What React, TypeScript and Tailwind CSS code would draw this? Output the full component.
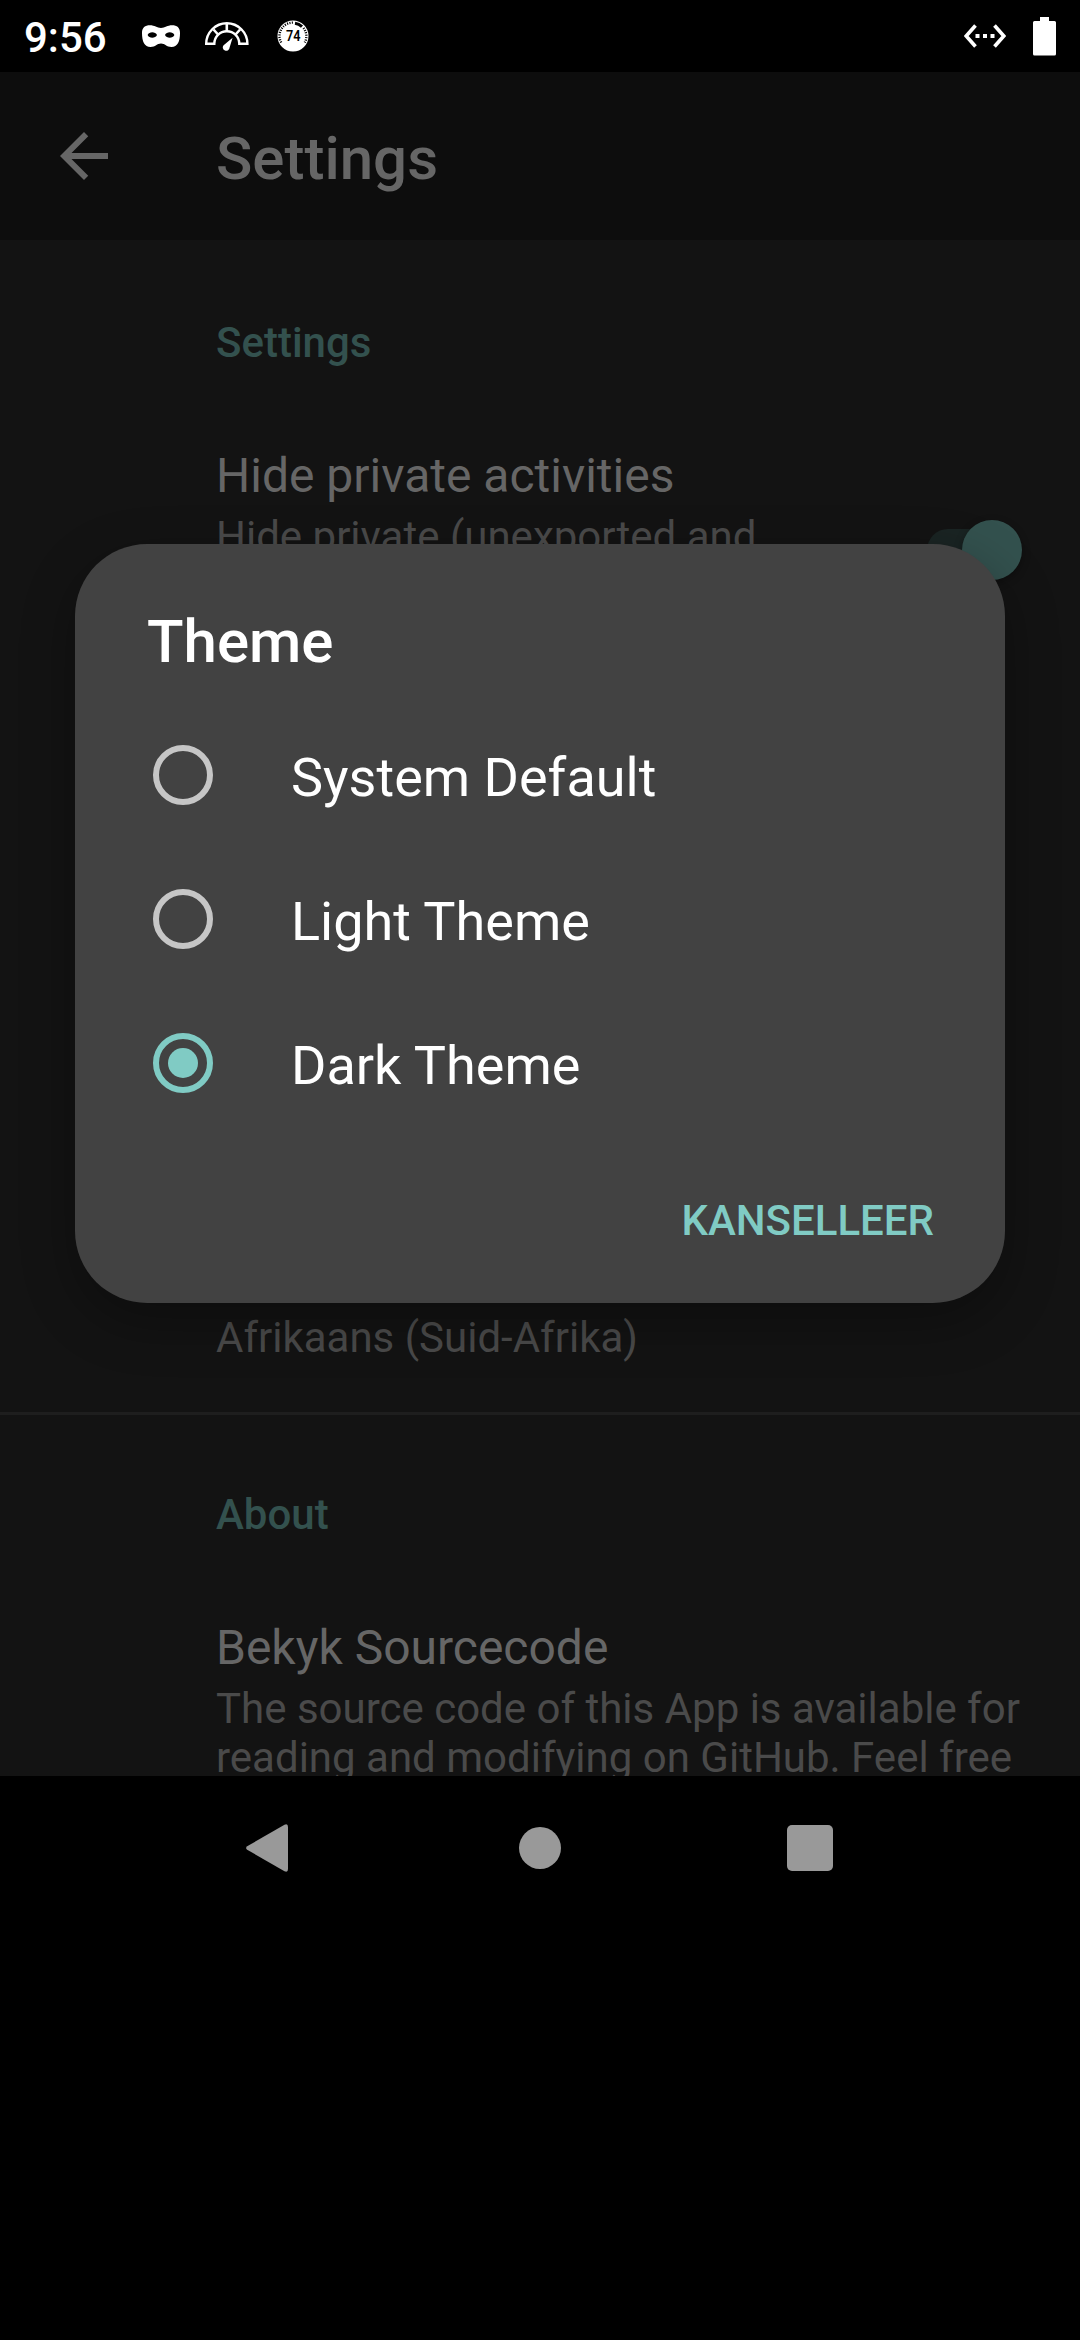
import React from "react";

const MaskIcon = () => (
  <svg className="ml-[36px] h-[24px] w-[40px]" viewBox="0 0 40 24">
    <path
      fill="#fff"
      fillRule="evenodd"
      d="M9 1.300C13.500 1.300 16 4 20 4C24 4 26.500 1.300 31 1.300C36 1.300 39 3.600 39 9C39 17.500 36.500 23 30.500 23C25.500 23 24 19.500 20 19.500C16 19.500 14.500 23 9.500 23C3.500 23 1 17.500 1 9C1 3.600 4 1.300 9 1.300ZM6.600 11C8 14.500 14.500 14.500 16 11C14.500 7.400 8 7.400 6.600 11ZM33.400 11C32 7.400 25.500 7.400 24 11C25.500 14.500 32 14.500 33.400 11Z"
    />
  </svg>
);

const GaugeIcon = () => (
  <svg className="ml-[23px] h-[30px] w-[46px]" viewBox="0 0 46 30" fill="none" stroke="#fff">
    <path strokeWidth="2.400" d="M2.200 22.800A20.600 20.600 0 0 1 43.400 22.800H35.300A12.500 12.500 0 0 0 10.300 22.800Z" />
    <path strokeWidth="2.600" d="M22.800 2V10.500M9.500 8.500L14.500 14M36.100 8.500L31.100 14" />
    <path fill="#fff" stroke="none" d="M28.600 16.800L25.600 26.500A3.400 3.400 0 1 1 19.600 24.200Z" />
  </svg>
);

const BadgeIcon = () => (
  <svg className="ml-[27px] h-[32px] w-[32px]" viewBox="0 0 32 32">
    <circle cx="16" cy="16" r="15.500" fill="#fff" />
    <path
      d="M4.200 22.500A13.300 13.300 0 0 1 17 2.700"
      fill="none"
      stroke="#000"
      strokeWidth="2.400"
      strokeDasharray="1.100 1.300"
    />
    <path d="M18 3.200A13 13 0 0 1 25 6.700" fill="none" stroke="#000" strokeWidth="3" />
    <path
      d="M26.500 8A13.300 13.300 0 0 1 27.800 22.500"
      fill="none"
      stroke="#000"
      strokeWidth="2.400"
      strokeDasharray="1.100 1.300"
    />
    <text
      x="9"
      y="21.300"
      textLength="14.500"
      lengthAdjust="spacingAndGlyphs"
      fontFamily="Roboto, sans-serif"
      fontWeight="600"
      fontSize="15"
      fill="#000"
    >
      74
    </text>
  </svg>
);

const LinkIcon = () => (
  <svg className="h-[24px] w-[42px]" viewBox="0 0 42 24">
    <path d="M11.500 1.500L2.200 12L11.500 22.500M30.500 1.500L39.800 12L30.500 22.500" fill="none" stroke="#fff" strokeWidth="3.600" />
    <path d="M11.500 10h4v4h-4zM19 10h4v4h-4zM26.500 10h4v4h-4z" fill="#fff" />
  </svg>
);

const BatteryIcon = () => (
  <svg className="ml-[27px] mr-[24px] h-[39px] w-[23px]" viewBox="0 0 23 39">
    <path d="M7 0h9v4h5.500q1.500 0 1.500 1.500v31.500q0 1.500 -1.500 1.500h-20q-1.500 0 -1.500 -1.500v-31.500q0 -1.500 1.500 -1.500h5.500z" fill="#fff" />
  </svg>
);

function StatusBar() {
  return (
    <header className="flex h-[72px] items-center bg-black">
      <span className="ml-[24px] w-[81px] pt-[3px] text-[42px] leading-[49px] font-medium text-white">9:56</span>
      <MaskIcon />
      <GaugeIcon />
      <BadgeIcon />
      <div className="flex-1" />
      <LinkIcon />
      <BatteryIcon />
    </header>
  );
}

function Category({ children }: { children: React.ReactNode }) {
  return <h2 className="text-[42px] leading-[49px] font-medium text-[#33514e]">{children}</h2>;
}

const options = [
  { label: "System Default", selected: false },
  { label: "Light Theme", selected: false },
  { label: "Dark Theme", selected: true },
];

function ThemeDialog() {
  return (
    <section
      role="dialog"
      className="absolute top-[544px] left-[75px] flex h-[759px] w-[930px] flex-col rounded-[72px] bg-[#424242] pt-[63px] shadow-[0_18px_54px_rgba(0,0,0,0.3)]"
    >
      <h2 className="ml-[72px] text-[60px] leading-[70px] font-medium text-white">Theme</h2>
      <div className="mt-[26px]">
        {options.map((o) => (
          <div key={o.label} className="flex h-[144px] items-center pl-[78px]">
            <span
              className={
                o.selected
                  ? "flex size-[60px] items-center justify-center rounded-full border-[6px] border-[#80cbc4]"
                  : "size-[60px] rounded-full border-[6px] border-[#c6c6c6]"
              }
            >
              {o.selected && <span className="size-[30px] rounded-full bg-[#80cbc4]" />}
            </span>
            <span className="ml-[78px] pt-[5px] text-[54px] leading-[64px] text-white">{o.label}</span>
          </div>
        ))}
      </div>
      <button className="mt-[61px] mr-[71px] self-end text-[42px] leading-[49px] font-medium text-[#80cbc4]">
        KANSELLEER
      </button>
    </section>
  );
}

export default function App() {
  return (
    <div className="relative flex h-[2340px] w-[1080px] flex-col overflow-hidden bg-black font-['Roboto',sans-serif]">
      <StatusBar />
      <div className="flex h-[168px] items-start bg-[#0d0d0d]">
        <svg className="mt-[60px] ml-[60px] h-[48px] w-[48px]" viewBox="4 4 16 16">
          <path fill="#666" d="M20 11H7.830l5.590-5.590L12 4l-8 8 8 8 1.410-1.410L7.830 13H20v-2z" />
        </svg>
        <h1 className="mt-[52px] ml-[108px] text-[60px] leading-[70px] font-medium text-[#666]">Settings</h1>
      </div>

      <main className="flex h-[1536px] flex-col overflow-hidden bg-[#131313]">
        <div className="h-[1172px] shrink-0 pt-[78px] pl-[216px]">
          <Category>Settings</Category>
          <div className="mt-[81px] flex">
            <div className="w-[711px]">
              <h3 className="text-[48px] leading-[56px] text-[#666]">Hide private activities</h3>
              <p className="mt-2 text-[42px] leading-[49px] text-[#4a4a4a]">Hide private (unexported and</p>
            </div>
            <div className="mt-[81px] flex h-[42px] w-[90px] items-center justify-end rounded-full bg-[#1a2423]">
              <span className="-mr-[5px] size-[60px] shrink-0 rounded-full bg-[#33514e] shadow-[0_3px_9px_rgba(0,0,0,0.3)]" />
            </div>
          </div>
          <p className="mt-[742px] text-[42px] leading-[49px] text-[#4a4a4a]">Afrikaans (Suid-Afrika)</p>
        </div>
        <div className="h-[3px] shrink-0 bg-[#1e1e1e]" />
        <div className="shrink-0 pt-[75px] pl-[216px]">
          <Category>About</Category>
          <h3 className="mt-[81px] text-[48px] leading-[56px] text-[#666]">Bekyk Sourcecode</h3>
          <p className="mt-2 text-[42px] leading-[49px] whitespace-nowrap text-[#4a4a4a]">
            The source code of this App is available for
            <br />
            reading and modifying on GitHub. Feel free
          </p>
        </div>
      </main>

      <nav className="flex h-[144px] items-center bg-black">
        <svg className="ml-[246px] h-[48px] w-[42px]" viewBox="0 0 42 48">
          <path d="M1.200 22.200L38.500 0.800Q42 -0.700 42 3V45Q42 48.700 38.500 47.200L1.200 25.800Q-1 24 1.200 22.200Z" fill="#999" />
        </svg>
        <span className="ml-[231px] size-[42px] rounded-full bg-[#999]" />
        <span className="ml-[226px] size-[46px] rounded-[5px] bg-[#999]" />
      </nav>

      <ThemeDialog />
    </div>
  );
}
